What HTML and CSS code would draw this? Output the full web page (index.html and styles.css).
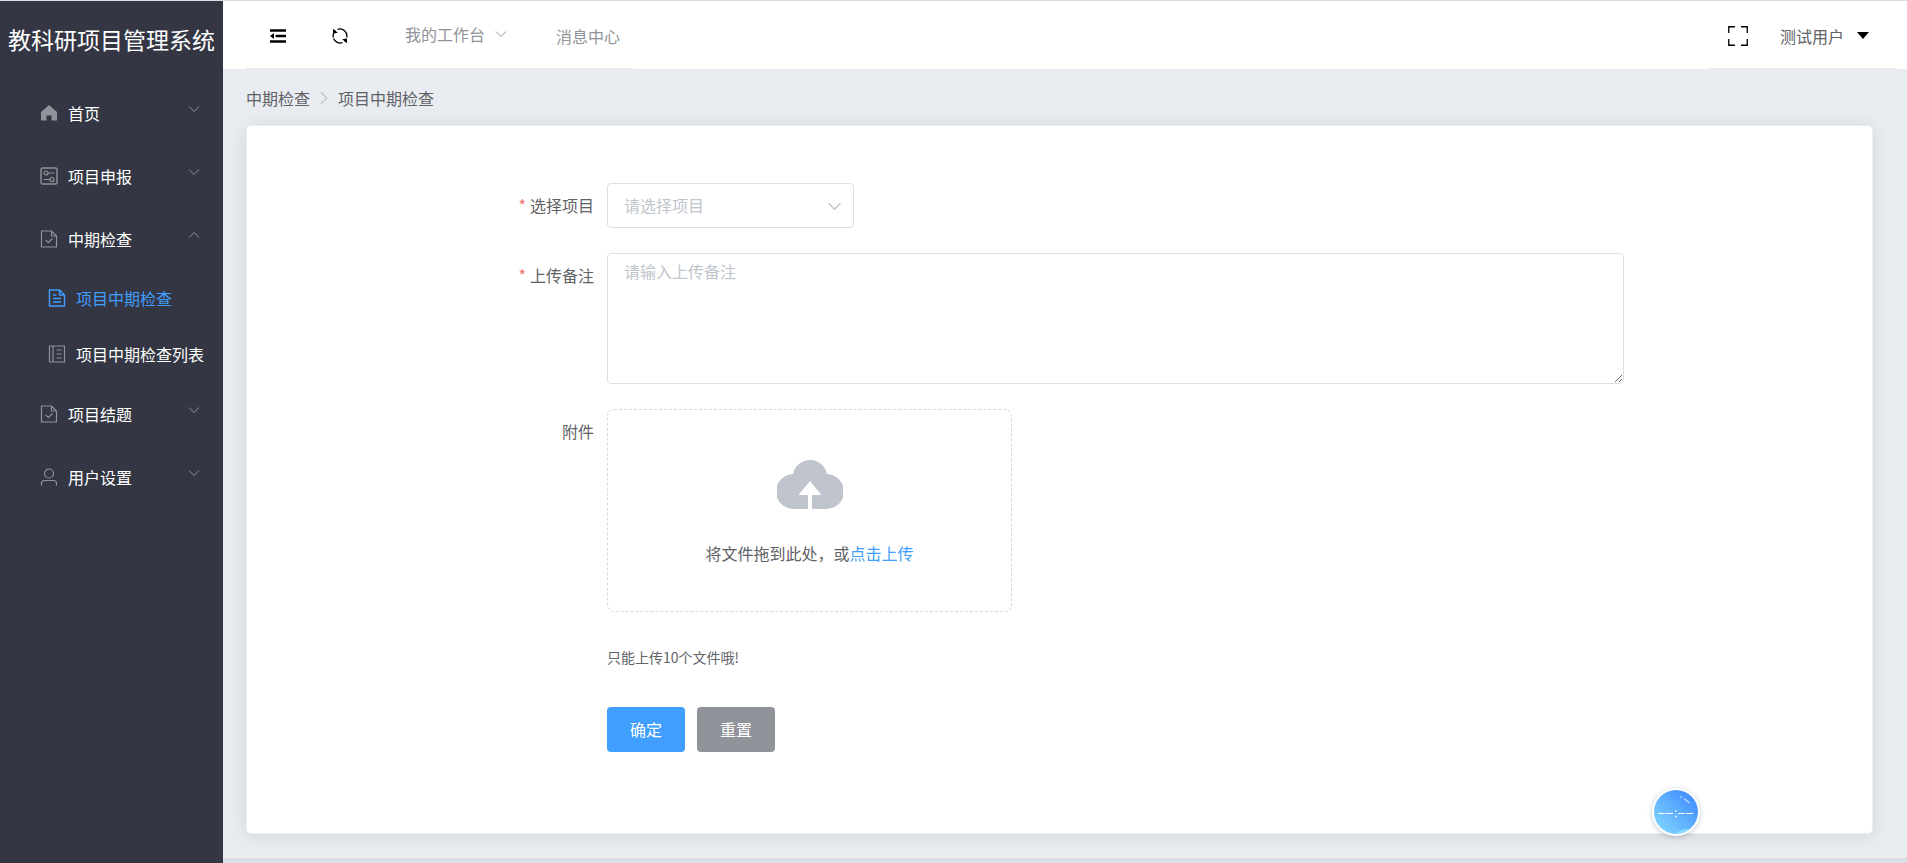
FILE: index.html
```html
<!DOCTYPE html>
<html lang="zh-CN">
<head>
<meta charset="utf-8">
<title>教科研项目管理系统</title>
<link rel="stylesheet" href="styles.css">
</head>
<body>
<svg class="sprite" aria-hidden="true">
  <symbol id="down" viewBox="0 0 12 8"><path d="M1 1.5 6 6.5 11 1.5" fill="none" stroke="currentColor"/></symbol>
  <symbol id="doc-check" viewBox="0 0 18 18"><path d="M1.5 1H11.5L16.5 6V17H1.5ZM11.5 1V6H16.5M5.5 10 8.500 12.500 12.500 8.500" fill="none" stroke="currentColor" stroke-width="1.200"/></symbol>
</svg>
<div class="app">
  <aside class="sidebar">
    <h1 class="brand">教科研项目管理系统</h1>
    <nav class="menu">
      <button class="menu-item" type="button">
        <svg class="icon" viewBox="0 0 18 18"><path d="M9 1 17 8V16.5H11.5V11.5H6.5V16.5H1V8Z" fill="currentColor"/></svg>
        <span>首页</span><svg class="arrow"><use href="#down"/></svg>
      </button>
      <button class="menu-item" type="button">
        <svg class="icon" viewBox="0 0 18 18" fill="none" stroke="currentColor" stroke-width="1.2"><rect x="1" y="1" width="16" height="16" rx="1.5" stroke-width="1.4"/><circle cx="6" cy="6" r="2"/><path d="M8 6H14.5M3.5 12.5H10"/><circle cx="12" cy="12.5" r="2"/></svg>
        <span>项目申报</span><svg class="arrow"><use href="#down"/></svg>
      </button>
      <button class="menu-item open" type="button" aria-expanded="true">
        <svg class="icon"><use href="#doc-check"/></svg>
        <span>中期检查</span><svg class="arrow"><use href="#down"/></svg>
      </button>
      <a class="menu-item sub active" href="#check">
        <svg class="icon" viewBox="0 0 18 18" fill="none" stroke="currentColor" stroke-width="1.4"><path d="M1.500 1H11.500L16.500 6V17H1.500ZM11.500 1V6H16.500M5 6H8.500M5 9.500H13M5 13H13"/></svg>
        <span>项目中期检查</span>
      </a>
      <a class="menu-item sub" href="#list">
        <svg class="icon" viewBox="0 0 18 18" fill="none" stroke="currentColor" stroke-width="1.2"><path d="M1.500 1H16.500V17H1.500ZM5 1V17M8.500 5H13.500M8.500 9H13.500M8.500 13H13.500"/></svg>
        <span>项目中期检查列表</span>
      </a>
      <button class="menu-item" type="button">
        <svg class="icon"><use href="#doc-check"/></svg>
        <span>项目结题</span><svg class="arrow"><use href="#down"/></svg>
      </button>
      <button class="menu-item" type="button">
        <svg class="icon" viewBox="0 0 18 18" fill="none" stroke="currentColor" stroke-width="1.2"><circle cx="9" cy="5.500" r="4.500"/><path d="M1.500 17.500V15.500Q1.500 12.500 4.500 12.500H13.500Q16.500 12.500 16.500 15.500V17.500"/></svg>
        <span>用户设置</span><svg class="arrow"><use href="#down"/></svg>
      </button>
    </nav>
  </aside>
  <div class="page">
    <header class="header">
      <nav class="tools">
        <button class="tool" type="button" aria-label="折叠菜单">
          <svg width="16" height="14" viewBox="0 0 16 14"><path d="M0 1.500H16M5.500 7H16M0 12.500H16" stroke="#000" stroke-width="2.600"/><path d="M0 7 4 4V10Z"/></svg>
        </button>
        <button class="tool refresh" type="button" aria-label="刷新">
          <svg width="16" height="16" viewBox="0 0 16 16"><path d="M5.500 1.300A7 7 0 0 1 14.700 9.500M2.500 3.800A7 7 0 0 0 1.300 9.500M10.500 14.700A7 7 0 0 1 1.600 10.500M13.500 12.200 12.500 13.400M2.500 3.800 3.500 2.600" fill="none" stroke="#000" stroke-width="1.300"/><path d="M1 .8 5.800 4.800 1 5.600ZM15 15.200 10.200 11.200 15 10.400Z"/></svg>
        </button>
        <button class="tool text work" type="button">我的工作台<svg class="arrow"><use href="#down"/></svg></button>
        <a class="tool text" href="#messages">消息中心</a>
      </nav>
      <div class="tools user">
        <button class="tool" type="button" aria-label="全屏">
          <svg width="20" height="20" viewBox="0 0 20 20" fill="none" stroke="#000" stroke-width="1.300"><path d="M.75 7V.75H7M13 .75H19.250V7M19.250 13V19.250H13M7 19.250H.75V13"/></svg>
        </button>
        <button class="tool name" type="button">测试用户<svg width="12" height="7" viewBox="0 0 12 7"><path d="M0 0H12L6 7Z"/></svg></button>
      </div>
    </header>
    <main class="main">
      <nav class="crumbs" aria-label="面包屑">
        <a href="#mid">中期检查</a>
        <svg width="8" height="12" viewBox="0 0 8 12"><path d="M1 .5 7 6 1 11.500" fill="none" stroke="#c0c4cc" stroke-width="1.300"/></svg>
        <span>项目中期检查</span>
      </nav>
      <section class="card">
        <form class="form">
          <label class="label required" for="project">选择项目</label>
          <div class="select">
            <select id="project" required><option value="">请选择项目</option></select>
            <svg viewBox="0 0 12 8"><path d="M.5 1 6 6.500 11.500 1" fill="none" stroke="#c0c4cc" stroke-width="1.400"/></svg>
          </div>
          <label class="label required" for="note">上传备注</label>
          <textarea class="note" id="note" placeholder="请输入上传备注" required></textarea>
          <span class="label">附件</span>
          <div class="files">
            <div class="drop">
              <svg width="66" height="50" viewBox="0 0 66 50" fill="#c0c4cc"><path d="M17 50A17.500 17.500 0 0 1 16 15A17.300 17.300 0 0 1 50 15A17.500 17.500 0 0 1 49 50H35V36H44.500L33 22 21.500 36H31V50Z"/></svg>
              <p>将文件拖到此处，或<a href="#upload">点击上传</a></p>
            </div>
            <p class="tip">只能上传10个文件哦!</p>
          </div>
          <div class="actions">
            <button class="btn primary" type="button">确定</button>
            <button class="btn" type="reset">重置</button>
          </div>
        </form>
      </section>
    </main>
  </div>
</div>
<div class="clock" aria-hidden="true">
  <svg width="44" height="44" viewBox="0 0 44 44">
    <defs><linearGradient id="sky" x1="0" y1="1" x2="1" y2="0"><stop offset=".1" stop-color="#7fd3ff"/><stop offset=".9" stop-color="#408cff"/></linearGradient></defs>
    <circle cx="22" cy="22" r="22" fill="url(#sky)"/>
    <path d="M21 43.500Q28 38.500 36 39Q30 44 21 43.500Z" fill="#8be0ff"/>
    <path d="M4 23.500H11M12 23.500H19M24 23.500H31M32 23.500H39" stroke="#fff"/>
    <path d="M21 21H22.500M21 26.500H22.500" stroke="#fff" stroke-width="1.500"/>
    <path d="M26 6.500 28 7.500M30 8.500 35.500 13" stroke="#bfe0ff" stroke-width="1.200"/>
  </svg>
</div>
</body>
</html>
```
FILE: styles.css
```css
* { box-sizing: border-box; }
body {
  margin: 0;
  font: 16px/24px "Noto Sans CJK SC", "Noto Sans", sans-serif;
  color: #606266;
}
button, select, textarea { font: inherit; color: inherit; }
button { border: 0; padding: 0; background: none; cursor: pointer; }
a { color: inherit; text-decoration: none; }
p { margin: 0; }
.sprite { position: absolute; width: 0; height: 0; }
.app { display: flex; min-height: 100vh; border-top: 1px solid #dcdddf; }

.sidebar { flex: 0 0 223px; background: #343743; color: #fff; }
.brand {
  margin: 0;
  height: 80px;
  padding-top: 22px;
  font-size: 23px;
  line-height: 32px;
  font-weight: 400;
  text-align: center;
  white-space: nowrap;
}
.menu { display: flex; flex-direction: column; }
.menu-item { display: flex; align-items: center; gap: 10px; height: 63px; padding: 0 23px 0 40px; }
.icon { width: 18px; height: 18px; color: #909399; }
.arrow { width: 12px; height: 8px; color: #909399; }
.menu-item .arrow { margin: 0 0 8px auto; }
.open .arrow { transform: rotate(180deg); }
.sub { height: 56px; padding: 0 0 0 48px; }
.active, .active .icon { color: #409eff; }

.page { flex: 1; min-width: 0; display: flex; flex-direction: column; }
.header { display: flex; justify-content: space-between; height: 68px; padding: 0 11px 0 23px; background: #fff; }
.tools { display: flex; align-items: center; padding: 2px 13px 0 24px; border-bottom: 1px solid #e6e6e6; }
.tool { display: flex; align-items: center; }
.refresh { margin-left: 46px; }
.text { color: #909399; }
.work { gap: 10px; margin: 0 49px 0 57px; padding-bottom: 4px; }
.user { padding: 2px 27px 0 19px; }
.name { gap: 13px; margin-left: 32px; }

.main { flex: 1; display: flex; flex-direction: column; padding: 0 34px 24px 23px; background: #e9ecf1; border-bottom: 5px solid #dbdee5; }
.crumbs { display: flex; align-items: center; gap: 10px; padding: 17px 0 15px; }
.card {
  flex: 1;
  padding: 57px 248px 81px 225px;
  background: #fff;
  border: 1px solid #ebeef5;
  border-radius: 5px;
  box-shadow: 0 2px 20px rgba(0, 0, 0, .1);
}
.form { display: grid; grid-template-columns: 122px minmax(0, 1fr); column-gap: 13px; row-gap: 25px; }
.label { line-height: 45px; text-align: right; }
.required::before { content: "*"; margin-right: 4px; color: #f56c6c; }
.select { position: relative; width: 247px; }
.select select {
  display: block;
  width: 100%;
  height: 45px;
  padding: 0 40px 2px 16px;
  appearance: none;
  border: 1px solid #dcdfe6;
  border-radius: 4px;
  background: #fff;
  color: #c0c4cc;
}
.select svg { position: absolute; right: 13px; top: 19px; width: 13px; height: 9px; pointer-events: none; }
.note { display: block; width: 100%; height: 131px; padding: 5px 16px; border: 1px solid #dcdfe6; border-radius: 4px; resize: vertical; }
.note::placeholder { color: #c0c4cc; }
.drop {
  display: flex;
  flex-direction: column;
  align-items: center;
  gap: 32px;
  width: 405px;
  height: 203px;
  padding-top: 49px;
  border: 1px dashed #d9d9d9;
  border-radius: 7px;
}
.drop a { color: #409eff; }
.tip { padding: 33px 0 1px; font-size: 14px; }
.actions { grid-column: 2; display: flex; gap: 12px; padding-top: 12px; }
.btn { width: 78px; height: 45px; padding-bottom: 2px; border-radius: 4px; background: #909399; color: #fff; }
.primary { background: #409eff; }

.clock {
  position: fixed;
  right: 207px;
  bottom: 27px;
  display: flex;
  padding: 2px;
  border-radius: 50%;
  background: #fff;
  box-shadow: 0 1px 5px rgba(0, 40, 80, .25);
}
```
